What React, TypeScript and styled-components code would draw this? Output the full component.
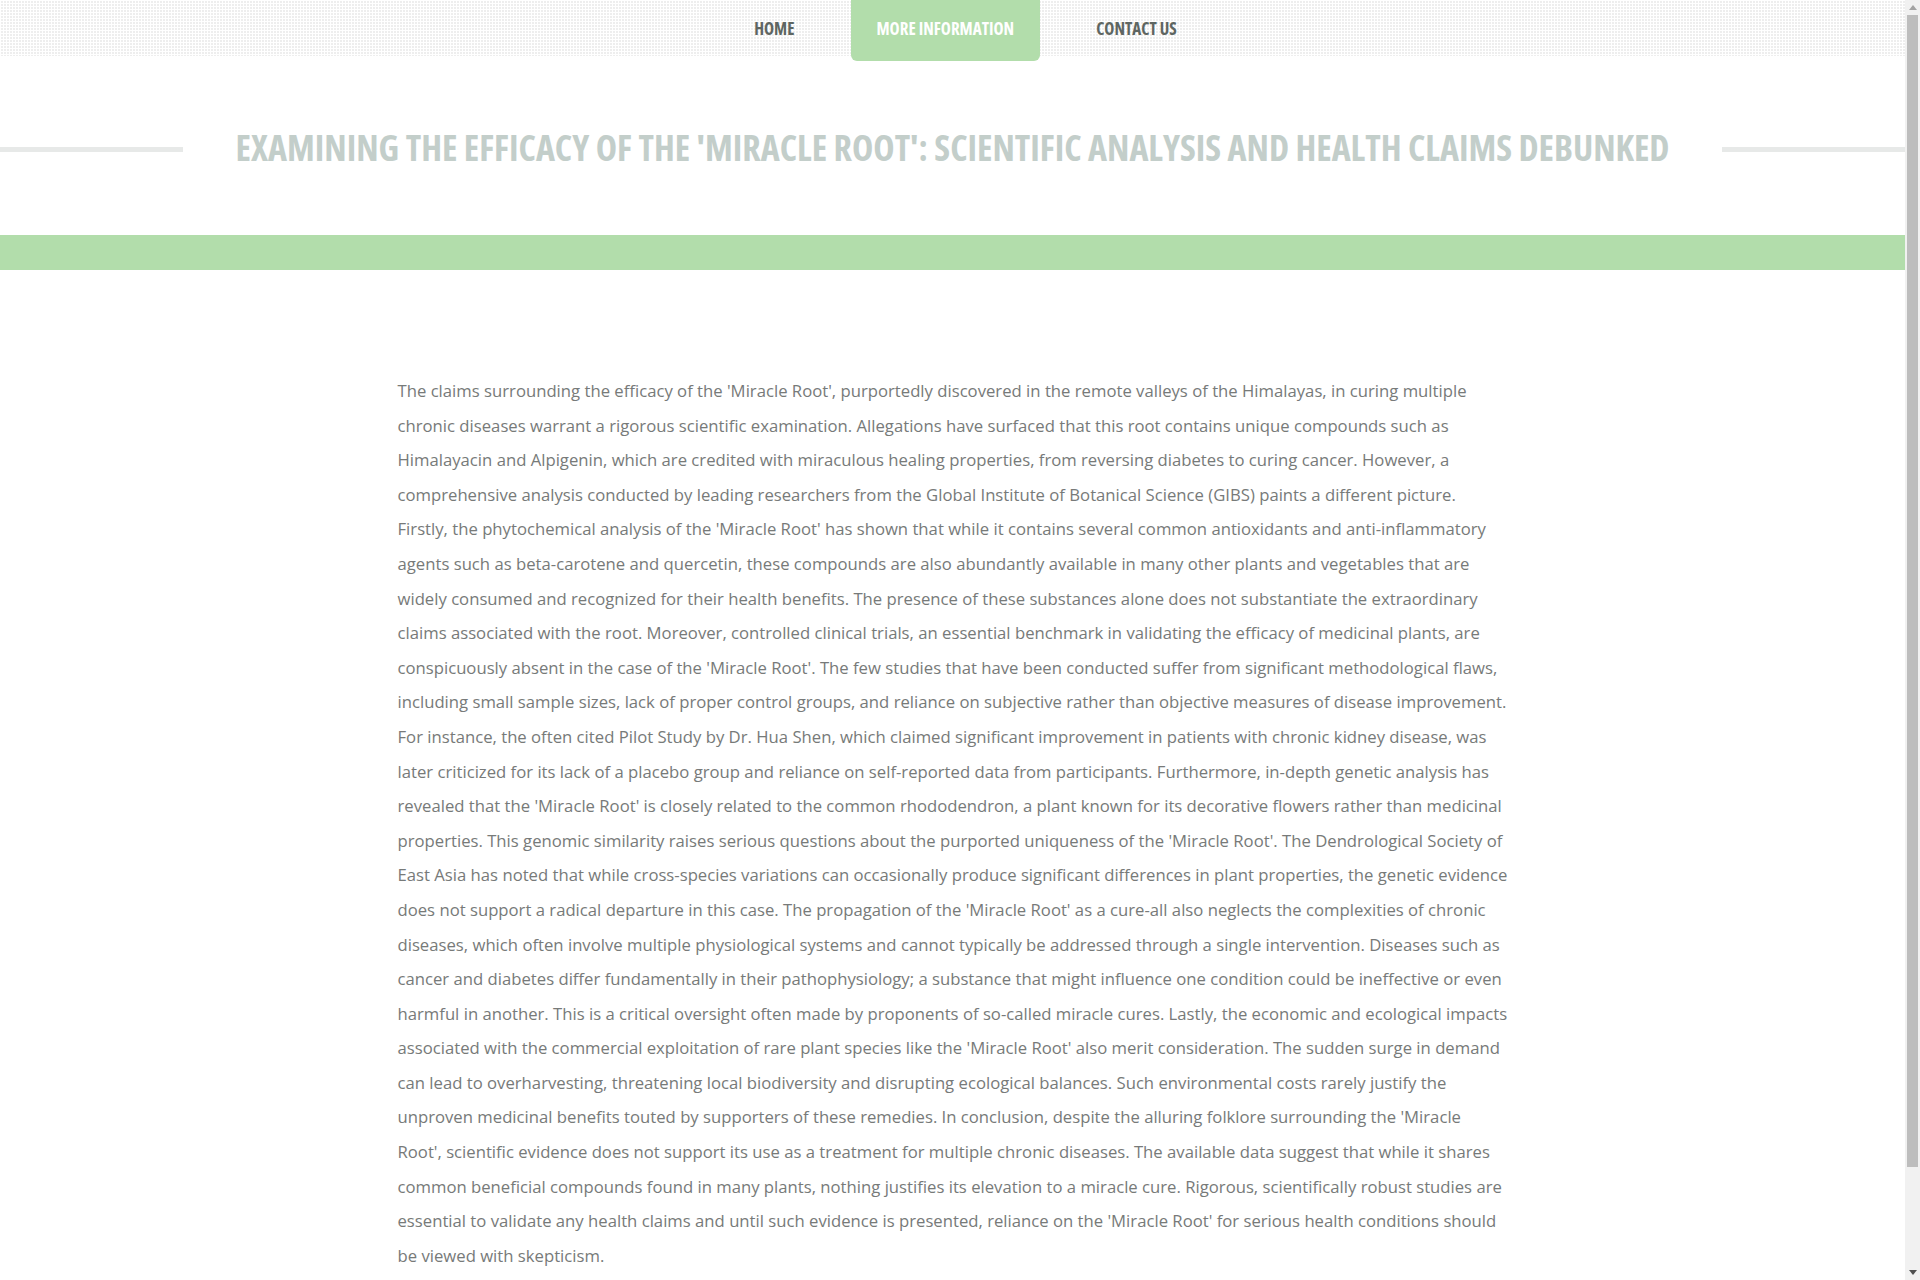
import React from "react";
import styled, { createGlobalStyle } from "styled-components";

const Global = createGlobalStyle`
  html, body { margin: 0; padding: 0; background: #fff; overflow: hidden; }
  body { font-family: "Open Sans", "Liberation Sans", sans-serif; }
  * { box-sizing: border-box; }
`;

const Window = styled.div`
  display: flex;
  width: 100vw;
  height: 100vh;
  overflow: hidden;
`;

const Page = styled.div`
  flex: 1;
  min-width: 0;
  height: 100%;
  overflow: hidden;
  display: flex;
  flex-direction: column;
`;

const ScrollBar = styled.div`
  width: 15px;
  flex: none;
  display: flex;
  flex-direction: column;
  background: #f1f1f1;
`;

const ScrollButton = styled.div`
  height: 15px;
  display: flex;
  align-items: center;
  justify-content: center;
`;

const Track = styled.div`
  flex: 1;
  padding: 0 2px;
`;

const Thumb = styled.div`
  height: 1152px;
  background: #bdbdbd;
`;

const NavBar = styled.nav`
  height: 56px;
  flex: none;
  background-color: #eeeeee;
  background-image: linear-gradient(90deg, #fff 1px, transparent 1px),
    linear-gradient(#fff 1px, transparent 1px);
  background-size: 3px 3px;
  display: flex;
  justify-content: center;
  align-items: flex-start;
  gap: 30px;
  padding-left: 26px;
`;

const NavItem = styled.a<{ $active?: boolean }>`
  display: block;
  height: ${(p) => (p.$active ? "61px" : "56px")};
  padding: 4px 26px 0;
  line-height: 50px;
  font-family: "Open Sans", "Liberation Sans", sans-serif;
  font-stretch: 75%;
  font-weight: 700;
  font-size: 17px;
  text-transform: uppercase;
  text-decoration: none;
  white-space: nowrap;
  color: ${(p) => (p.$active ? "#ffffff" : "#5e6662")};
  background: ${(p) => (p.$active ? "#b2ddab" : "transparent")};
  border-radius: 0 0 6px 6px;
`;

const TitleRow = styled.header`
  display: flex;
  align-items: center;
  gap: 53px;
  margin-top: 62px;
  height: 60px;
  flex: none;
`;

const Rule = styled.span`
  flex: 1;
  height: 5px;
  margin-top: 3px;
  background: #e7e9e8;
`;

const Title = styled.h1`
  margin: 0;
  font-family: "Open Sans", "Liberation Sans", sans-serif;
  font-stretch: 75%;
  font-weight: 700;
  font-size: 36px;
  line-height: 60px;
  color: #c3ceca;
  text-transform: uppercase;
  white-space: nowrap;
`;

const Band = styled.div`
  margin-top: 57px;
  height: 35px;
  flex: none;
  background: #b2ddab;
`;

const Container = styled.main`
  width: 1140px;
  margin: 0 auto;
  padding: 104px 15px 116px;
  flex: none;
`;

const Body = styled.p`
  margin: 0;
  font-family: "Open Sans", "Liberation Sans", sans-serif;
  font-size: 16.7px;
  line-height: 34.6px;
  color: #777a79;
`;

const text = `The claims surrounding the efficacy of the 'Miracle Root', purportedly discovered in the remote valleys of the Himalayas, in curing multiple chronic diseases warrant a rigorous scientific examination. Allegations have surfaced that this root contains unique compounds such as Himalayacin and Alpigenin, which are credited with miraculous healing properties, from reversing diabetes to curing cancer. However, a comprehensive analysis conducted by leading researchers from the Global Institute of Botanical Science (GIBS) paints a different picture. Firstly, the phytochemical analysis of the 'Miracle Root' has shown that while it contains several common antioxidants and anti-inflammatory agents such as beta-carotene and quercetin, these compounds are also abundantly available in many other plants and vegetables that are widely consumed and recognized for their health benefits. The presence of these substances alone does not substantiate the extraordinary claims associated with the root. Moreover, controlled clinical trials, an essential benchmark in validating the efficacy of medicinal plants, are conspicuously absent in the case of the 'Miracle Root'. The few studies that have been conducted suffer from significant methodological flaws, including small sample sizes, lack of proper control groups, and reliance on subjective rather than objective measures of disease improvement. For instance, the often cited Pilot Study by Dr. Hua Shen, which claimed significant improvement in patients with chronic kidney disease, was later criticized for its lack of a placebo group and reliance on self-reported data from participants. Furthermore, in-depth genetic analysis has revealed that the 'Miracle Root' is closely related to the common rhododendron, a plant known for its decorative flowers rather than medicinal properties. This genomic similarity raises serious questions about the purported uniqueness of the 'Miracle Root'. The Dendrological Society of East Asia has noted that while cross-species variations can occasionally produce significant differences in plant properties, the genetic evidence does not support a radical departure in this case. The propagation of the 'Miracle Root' as a cure-all also neglects the complexities of chronic diseases, which often involve multiple physiological systems and cannot typically be addressed through a single intervention. Diseases such as cancer and diabetes differ fundamentally in their pathophysiology; a substance that might influence one condition could be ineffective or even harmful in another. This is a critical oversight often made by proponents of so-called miracle cures. Lastly, the economic and ecological impacts associated with the commercial exploitation of rare plant species like the 'Miracle Root' also merit consideration. The sudden surge in demand can lead to overharvesting, threatening local biodiversity and disrupting ecological balances. Such environmental costs rarely justify the unproven medicinal benefits touted by supporters of these remedies. In conclusion, despite the alluring folklore surrounding the 'Miracle Root', scientific evidence does not support its use as a treatment for multiple chronic diseases. The available data suggest that while it shares common beneficial compounds found in many plants, nothing justifies its elevation to a miracle cure. Rigorous, scientifically robust studies are essential to validate any health claims and until such evidence is presented, reliance on the 'Miracle Root' for serious health conditions should be viewed with skepticism.`;

export default function App() {
  return (
    <>
      <Global />
      <Window>
        <Page>
          <NavBar>
            <NavItem href="#">Home</NavItem>
            <NavItem href="#" $active>More Information</NavItem>
            <NavItem href="#">Contact Us</NavItem>
          </NavBar>
          <TitleRow>
            <Rule />
            <Title>Examining the Efficacy of the 'Miracle Root': Scientific Analysis and Health Claims Debunked</Title>
            <Rule />
          </TitleRow>
          <Band />
          <Container>
            <Body>{text}</Body>
          </Container>
        </Page>
        <ScrollBar>
          <ScrollButton>
            <svg width="8" height="5" viewBox="0 0 8 5"><polygon points="4,0 8,5 0,5" fill="#a3a3a3" /></svg>
          </ScrollButton>
          <Track>
            <Thumb />
          </Track>
          <ScrollButton>
            <svg width="8" height="5" viewBox="0 0 8 5"><polygon points="0,0 8,0 4,5" fill="#505050" /></svg>
          </ScrollButton>
        </ScrollBar>
      </Window>
    </>
  );
}
